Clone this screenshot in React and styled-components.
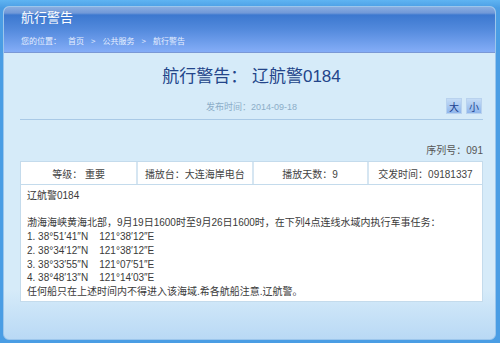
import React from "react";
import styled, { createGlobalStyle } from "styled-components";

const Global = createGlobalStyle`
  html, body { margin: 0; padding: 0; }
  body {
    background: #4c9fe6;
    font-family: "Liberation Sans", "Noto Sans CJK SC", sans-serif;
  }
`;

const Frame = styled.div`
  box-sizing: border-box;
  width: 500px;
  height: 343px;
  padding: 6px 4px 3px 3px;
  background: linear-gradient(to bottom, #5fb4f2 0, #4a9de4 8px, #4a9de4 100%);
`;

const Panel = styled.div`
  box-sizing: border-box;
  height: 100%;
  border-radius: 6px;
  overflow: hidden;
  border: 1px solid #9cc6ec;
  background: linear-gradient(to bottom, #d6ebf9 0, #d6ebf9 85%, #b9d9f5 100%);
  display: flex;
  flex-direction: column;
`;

const Header = styled.div`
  box-sizing: border-box;
  height: 46px;
  padding: 1px 0 0 17px;
  background: linear-gradient(
    to bottom,
    #8aaee0 0,
    #7199d8 6px,
    #3c78cf 8px,
    #5289dc 22px,
    #84adf7 100%
  );
  border-bottom: 1px solid #7a98d6;
`;

const HeaderTitle = styled.div`
  color: #ffffff;
  font-size: 13px;
  line-height: 18px;
  font-family: "Noto Sans CJK SC", sans-serif;
`;

const Crumbs = styled.div`
  display: flex;
  gap: 7px;
  color: #e6efff;
  font-size: 8px;
  line-height: 14px;
  margin-top: 8px;
  font-family: "Noto Sans CJK SC", sans-serif;
`;

const Body = styled.div`
  padding: 0 12px 0 16px;
  display: flex;
  flex-direction: column;
`;

const MainTitle = styled.h1`
  margin: 12px 0 0;
  text-align: center;
  font-weight: normal;
  font-size: 17px;
  line-height: 24px;
  color: #23458a;
  font-family: "Liberation Sans", "Noto Sans CJK SC", sans-serif;
`;

const MetaRow = styled.div`
  display: grid;
  grid-template-columns: 1fr auto 1fr;
  align-items: center;
  height: 20px;
  margin-top: 7px;
  padding-bottom: 3px;
  border-bottom: 1px solid #a9c9e6;
`;

const PubTime = styled.div`
  grid-column: 2;
  color: #8cadc8;
  font-size: 9px;
  font-family: "Liberation Sans", "Noto Sans CJK SC", sans-serif;
  padding-top: 1px;
`;

const SizeButtons = styled.div`
  grid-column: 3;
  justify-self: end;
  display: flex;
  gap: 4px;
  margin-right: 1px;
`;

const SizeBtn = styled.span`
  box-sizing: border-box;
  width: 16px;
  height: 16px;
  display: flex;
  align-items: center;
  justify-content: center;
  font-size: 10px;
  color: #1b3f8f;
  border: 1px solid #b9d2ee;
  background: linear-gradient(to bottom, #c5dcf6 0, #8fb6ec 100%);
  font-family: "Noto Sans CJK SC", sans-serif;
`;

const Serial = styled.div`
  margin-top: 24px;
  text-align: right;
  font-size: 10px;
  line-height: 14px;
  color: #555;
  font-family: "Liberation Sans", "Noto Sans CJK SC", sans-serif;
`;

const InfoGrid = styled.div`
  margin-top: 3px;
  display: grid;
  grid-template-columns: repeat(4, 1fr);
  background: #fff;
  border: 1px solid #c4dbec;
`;

const InfoCell = styled.div`
  height: 22px;
  display: flex;
  align-items: center;
  justify-content: center;
  font-size: 10px;
  color: #444;
  border-left: ${(p) => (p.$first ? "none" : "2px solid #d6e6f2")};
  font-family: "Liberation Sans", "Noto Sans CJK SC", sans-serif;
`;

const Content = styled.div`
  background: #fff;
  border: 1px solid #c4dbec;
  border-top: none;
  padding: 4px 6px 2px;
  font-size: 10px;
  line-height: 13.7px;
  color: #3a3a3a;
  font-family: "Liberation Sans", "Noto Sans CJK SC", sans-serif;
`;

const Line = styled.div`
  min-height: 13.7px;
  white-space: pre;
`;

export default function App() {
  const lines = [
    "辽航警0184",
    "",
    "渤海海峡黄海北部，9月19日1600时至9月26日1600时，在下列4点连线水域内执行军事任务：",
    "1. 38°51′41″N    121°38′12″E",
    "2. 38°34′12″N    121°38′12″E",
    "3. 38°33′55″N    121°07′51″E",
    "4. 38°48′13″N    121°14′03″E",
    "任何船只在上述时间内不得进入该海域.希各航船注意.辽航警。",
  ];
  return (
    <>
      <Global />
      <Frame>
        <Panel>
          <Header>
            <HeaderTitle>航行警告</HeaderTitle>
            <Crumbs>
              <span>您的位置：</span>
              <span>首页</span>
              <span>&gt;</span>
              <span>公共服务</span>
              <span>&gt;</span>
              <span>航行警告</span>
            </Crumbs>
          </Header>
          <Body>
            <MainTitle>航行警告： 辽航警0184</MainTitle>
            <MetaRow>
              <PubTime>发布时间：2014-09-18</PubTime>
              <SizeButtons>
                <SizeBtn>大</SizeBtn>
                <SizeBtn>小</SizeBtn>
              </SizeButtons>
            </MetaRow>
            <Serial>序列号：091</Serial>
            <InfoGrid>
              <InfoCell $first>等级：&nbsp;重要</InfoCell>
              <InfoCell>播放台：大连海岸电台</InfoCell>
              <InfoCell>播放天数：9</InfoCell>
              <InfoCell>交发时间：09181337</InfoCell>
            </InfoGrid>
            <Content>
              {lines.map((l, i) => (
                <Line key={i}>{l}</Line>
              ))}
            </Content>
          </Body>
        </Panel>
      </Frame>
    </>
  );
}
